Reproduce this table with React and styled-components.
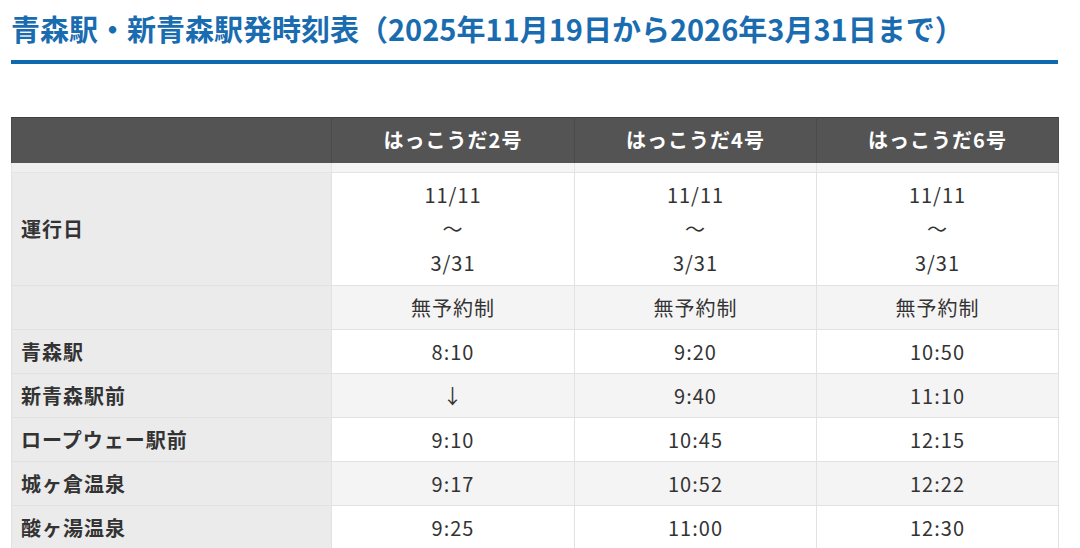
import React from "react";
import styled, { createGlobalStyle } from "styled-components";

const Global = createGlobalStyle`
  html, body { margin: 0; padding: 0; background: #fff; }
  body { font-family: "Noto Sans CJK JP", "Noto Sans", sans-serif; color: #333; }
`;

const Page = styled.div`
  padding: 8px 22px 0 11px;
`;

const Title = styled.h1`
  margin: 0;
  padding: 0 0 12px 0;
  font-size: 29px;
  line-height: 40px;
  font-weight: 700;
  color: #1a6cb0;
  border-bottom: 4px solid #0f69ae;
  letter-spacing: 0;
`;

const Table = styled.table`
  margin-top: 53px;
  width: 1047px;
  border-collapse: collapse;
  table-layout: fixed;
  font-size: 20px;
  letter-spacing: 1px;
`;

const HeadCell = styled.th`
  background: #545454;
  color: #fff;
  font-weight: 700;
  text-align: center;
  height: 45px;
  padding: 0 9px;
  line-height: 34px;
  border-top: 1px solid #3f3f3f;
  border-left: 1px solid #4a4a4a;
  border-right: 1px solid #4a4a4a;
  box-sizing: border-box;
`;

const SpacerCell = styled.td`
  height: 9px;
  padding: 0;
  background: ${(p) => (p.$label ? "#efefef" : "#f5f5f5")};
  border: 1px solid #e4e4e4;
  border-top: none;
`;

const Label = styled.th`
  background: #ebebeb;
  text-align: left;
  font-weight: 700;
  padding: 5px 9px;
  line-height: 33px;
  color: #333;
  border: 1px solid #e2e2e2;
`;

const Cell = styled.td`
  background: ${(p) => (p.$shade ? "#f5f4f4" : "#fff")};
  text-align: center;
  padding: 5px 9px;
  line-height: 33px;
  color: #333;
  border: 1px solid #e2e2e2;
`;

const Line = styled.div`
  line-height: 34px;
`;

const buses = ["はっこうだ2号", "はっこうだ4号", "はっこうだ6号"];

const rows = [
  { label: "", cells: ["無予約制", "無予約制", "無予約制"] },
  { label: "青森駅", cells: ["8:10", "9:20", "10:50"] },
  { label: "新青森駅前", cells: ["↓", "9:40", "11:10"] },
  { label: "ロープウェー駅前", cells: ["9:10", "10:45", "12:15"] },
  { label: "城ヶ倉温泉", cells: ["9:17", "10:52", "12:22"] },
  { label: "酸ヶ湯温泉", cells: ["9:25", "11:00", "12:30"] },
];

export default function App() {
  return (
    <Page>
      <Global />
      <Title>青森駅・新青森駅発時刻表（2025年11月19日から2026年3月31日まで）</Title>
      <Table>
        <colgroup>
          <col style={{ width: 320 }} />
          <col style={{ width: 243 }} />
          <col style={{ width: 242 }} />
          <col style={{ width: 242 }} />
        </colgroup>
        <thead>
          <tr>
            <HeadCell />
            {buses.map((b) => (
              <HeadCell key={b}>{b}</HeadCell>
            ))}
          </tr>
        </thead>
        <tbody>
          <tr>
            <SpacerCell $label />
            <SpacerCell />
            <SpacerCell />
            <SpacerCell />
          </tr>
          <tr>
            <Label>運行日</Label>
            {buses.map((b) => (
              <Cell key={b}>
                <Line>11/11</Line>
                <Line>～</Line>
                <Line>3/31</Line>
              </Cell>
            ))}
          </tr>
          {rows.map((r, i) => (
            <tr key={i}>
              <Label>{r.label}</Label>
              {r.cells.map((c, j) => (
                <Cell key={j} $shade={i % 2 === 0}>
                  {c}
                </Cell>
              ))}
            </tr>
          ))}
        </tbody>
      </Table>
    </Page>
  );
}
